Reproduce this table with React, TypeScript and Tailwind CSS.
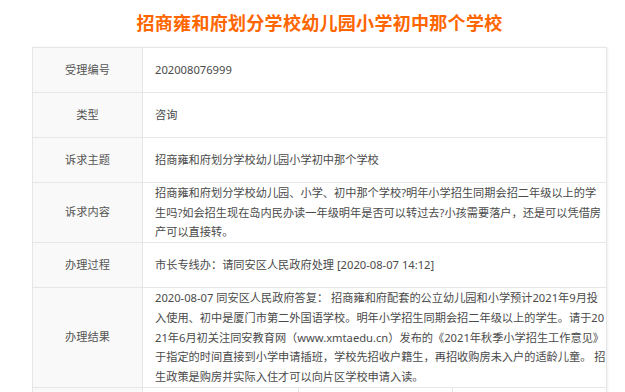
const rows: { label: string; lines: string[] }[] = [
  { label: '受理编号', lines: ['202008076999'] },
  { label: '类型', lines: ['咨询'] },
  { label: '诉求主题', lines: ['招商雍和府划分学校幼儿园小学初中那个学校'] },
  {
    label: '诉求内容',
    lines: [
      '招商雍和府划分学校幼儿园、小学、初中那个学校?明年小学招生同期会招二年级以上的学',
      '生吗?如会招生现在岛内民办读一年级明年是否可以转过去?小孩需要落户，还是可以凭借房',
      '产可以直接转。',
    ],
  },
  { label: '办理过程', lines: ['市长专线办：请同安区人民政府处理 [2020-08-07 14:12]'] },
  {
    label: '办理结果',
    lines: [
      '2020-08-07 同安区人民政府答复： 招商雍和府配套的公立幼儿园和小学预计2021年9月投',
      '入使用、初中是厦门市第二外国语学校。明年小学招生同期会招二年级以上的学生。请于20',
      '21年6月初关注同安教育网（www.xmtaedu.cn）发布的《2021年秋季小学招生工作意见》',
      '于指定的时间直接到小学申请插班，学校先招收户籍生，再招收购房未入户的适龄儿童。 招',
      '生政策是购房并实际入住才可以向片区学校申请入读。',
    ],
  },
];

export default function App() {
  return (
    <div className="w-[625px] h-[392px] overflow-hidden bg-white font-['Noto_Sans','Noto_Sans_CJK_SC',sans-serif]">
      <div className="ml-[32px] w-[575px]">
        <h1 className="h-[47px] flex items-center justify-center text-[18px] font-bold text-[#ff6600] tracking-[0.3px]">
          招商雍和府划分学校幼儿园小学初中那个学校
        </h1>
        <div className="border border-[#e6e6e6] shadow-[1px_0_2px_rgba(0,0,0,0.06)]">
          {rows.map((row) => (
            <div key={row.label} className="grid grid-cols-[110px_1fr] border-b border-[#e6e6e6]">
              <div className="bg-[#f9f9f9] border-r border-[#e6e6e6] flex items-center justify-center text-[11.2px] text-[#555]">
                {row.label}
              </div>
              <div className="min-h-[44px] flex items-center pl-[12px] pr-[8px] text-[11.2px] leading-[19.7px] text-[#4a4a4a] whitespace-nowrap">
                <div>
                  {row.lines.map((line, i) => (
                    <div key={i}>{line}</div>
                  ))}
                </div>
              </div>
            </div>
          ))}
          <div className="grid grid-cols-[110px_156px_154px_1fr] h-[44px]">
            <div className="bg-[#f9f9f9] border-r border-[#e6e6e6]"></div>
            <div className="border-r border-[#e6e6e6]"></div>
            <div className="border-r border-[#e6e6e6]"></div>
            <div></div>
          </div>
        </div>
      </div>
    </div>
  );
}
